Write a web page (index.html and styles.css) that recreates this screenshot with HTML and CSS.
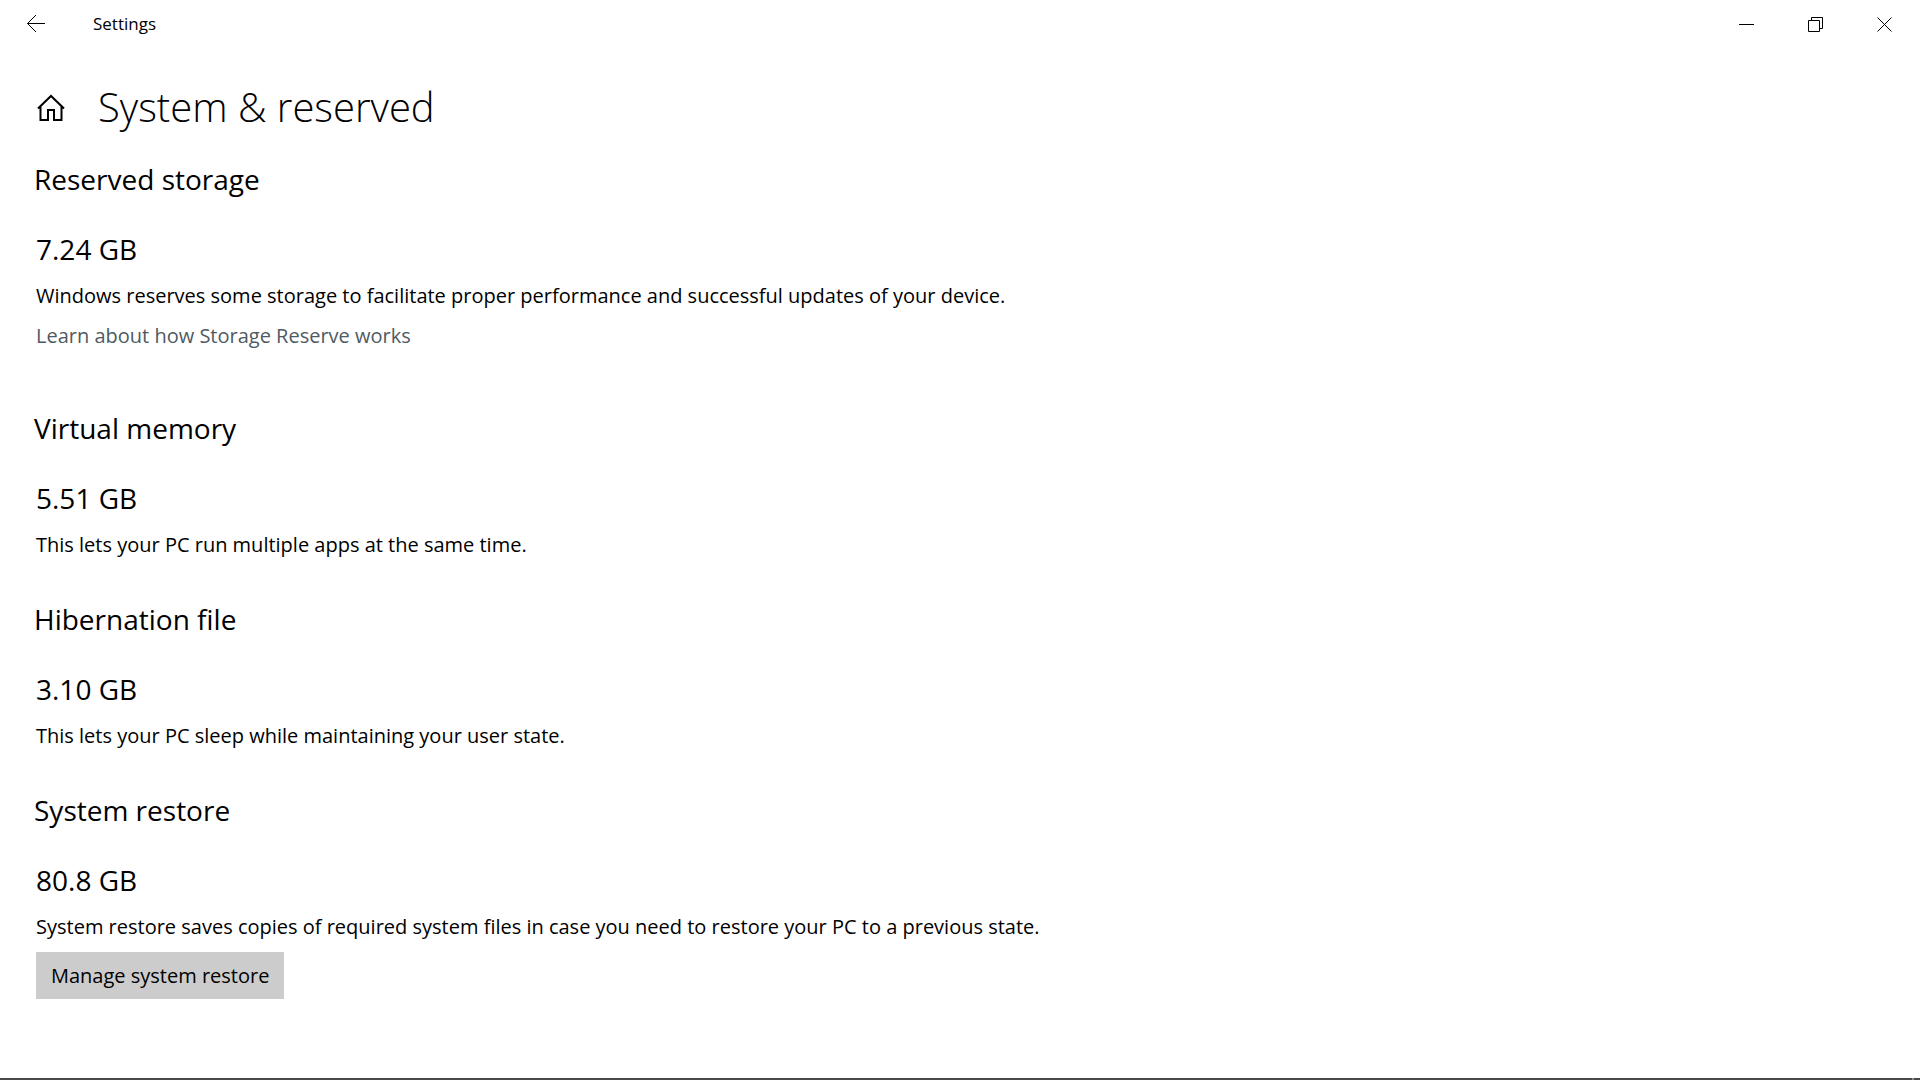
FILE: index.html
```html
<!DOCTYPE html>
<html lang="en">
<head>
  <meta charset="UTF-8">
  <meta name="viewport" content="width=device-width, initial-scale=1.0">
  <title>Settings</title>
  <link rel="stylesheet" href="styles.css">
</head>
<body>
  <!-- Title bar -->
  <header class="titlebar">
    <button class="back" aria-label="Back">
      <svg width="20" height="20" viewBox="0 0 20 20"><path d="M19 9.5H1.5M10 1L1.5 9.5L10 18"/></svg>
    </button>
    <span class="app-name">Settings</span>
    <div class="window-buttons">
      <button aria-label="Minimize">
        <svg width="15" height="15" viewBox="0 0 15 15"><path d="M0 7.5H15"/></svg>
      </button>
      <button aria-label="Restore">
        <svg width="15" height="15" viewBox="0 0 15 15"><path d="M.5 3.5H11.5V14.5H.5ZM3.5 3.5V.5H14.5V11.5H11.5"/></svg>
      </button>
      <button aria-label="Close">
        <svg width="15" height="15" viewBox="0 0 15 15"><path d="M.5 .5L14.5 14.5M14.5 .5L.5 14.5"/></svg>
      </button>
    </div>
  </header>

  <main class="content">
    <div class="page-title">
      <button class="home" aria-label="Home">
        <svg width="30" height="28" viewBox="0 0 30 28"><path d="M2 14.5L15 2L28 14.5M4.5 12.5V26H12V16H18V26H25.5V12.5"/></svg>
      </button>
      <h1>System &amp; reserved</h1>
    </div>

    <section class="group">
      <h2>Reserved storage</h2>
      <p class="size">7.24 GB</p>
      <p class="text">Windows reserves some storage to facilitate proper performance and successful updates of your device.</p>
      <a class="link" href="#">Learn about how Storage Reserve works</a>
    </section>

    <section class="group">
      <h2>Virtual memory</h2>
      <p class="size">5.51 GB</p>
      <p class="text">This lets your PC run multiple apps at the same time.</p>
    </section>

    <section class="group">
      <h2>Hibernation file</h2>
      <p class="size">3.10 GB</p>
      <p class="text">This lets your PC sleep while maintaining your user state.</p>
    </section>

    <section class="group">
      <h2>System restore</h2>
      <p class="size">80.8 GB</p>
      <p class="text">System restore saves copies of required system files in case you need to restore your PC to a previous state.</p>
      <button class="manage">Manage system restore</button>
    </section>
  </main>

  <!-- Top edge of the taskbar -->
  <footer class="taskbar"><span class="divider"></span></footer>
</body>
</html>
```

FILE: styles.css
```css
* {
  box-sizing: border-box;
}

body {
  margin: 0;
  min-height: 100vh;
  display: flex;
  flex-direction: column;
  background: #fff;
  color: #000;
  font-family: "Open Sans", "Noto Sans", sans-serif;
  font-size: 20px;
  line-height: 30px;
}

button {
  padding: 0;
  border: none;
  background: none;
  color: inherit;
  font: inherit;
}

svg {
  display: block;
  fill: none;
  stroke: #000;
}

/* Title bar */
.titlebar {
  display: flex;
  align-items: center;
  height: 48px;
  padding-right: 1px;
}

.back {
  display: flex;
  justify-content: center;
  width: 72px;
}

.app-name {
  margin-left: 21px;
  font-size: 17px;
}

.window-buttons {
  display: flex;
  height: 100%;
  margin-left: auto;
}

.window-buttons button {
  display: flex;
  align-items: center;
  justify-content: center;
  width: 69px;
}

/* Page */
.content {
  flex: 1;
  padding: 30px 36px;
}

.page-title {
  display: flex;
  align-items: center;
  gap: 32px;
  height: 60px;
}

.home svg {
  stroke-width: 2;
}

h1 {
  margin: 0;
  padding-bottom: 2px;
  font-size: 40px;
  font-weight: 300;
  line-height: 58px;
}

h2 {
  margin: 0 0 30px -2px;
  font-size: 28px;
  font-weight: 400;
  line-height: 40px;
}

.group {
  padding: 21px 0 8px;
}

.size {
  margin: 0;
  font-size: 28px;
  line-height: 40px;
}

.text {
  margin: 12px 0 10px;
}

.link {
  display: inline-block;
  margin-bottom: 28px;
  color: #4f5a62;
  text-decoration: none;
}

.manage {
  height: 47px;
  padding: 0 15px;
  background: #ccc;
}

/* Taskbar */
.taskbar {
  display: flex;
  justify-content: flex-end;
  height: 2px;
  padding-right: 6px;
  background: #4a484a;
}

.divider {
  width: 2px;
  background: #8c8a8c;
}
```
